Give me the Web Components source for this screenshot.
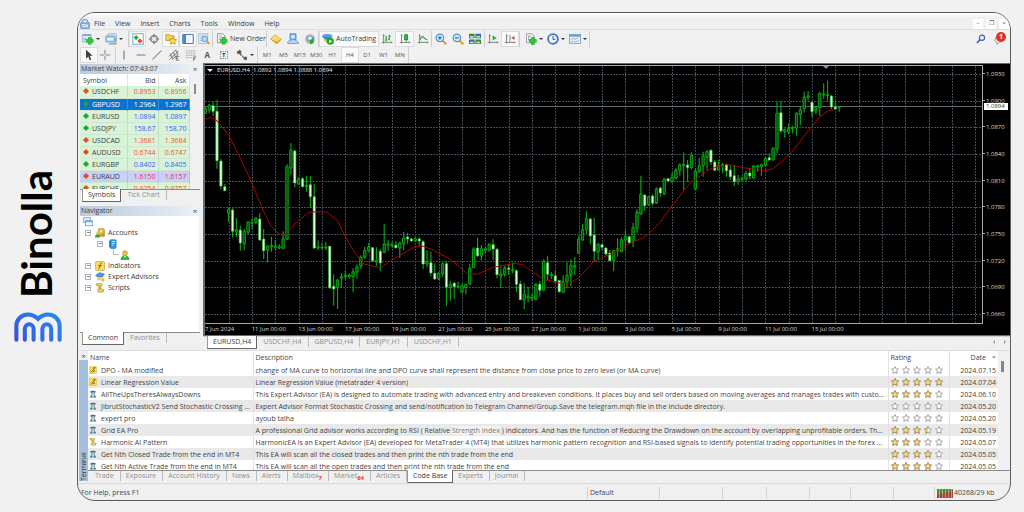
<!DOCTYPE html>
<html lang="en">
<head>
<meta charset="utf-8">
<title>Binolla trading terminal</title>
<style>
  html, body { margin: 0; height: 100%; }
  body {
    display: flex;
    background: #f1f1f1;
    color: #3c3c3c;
    font: 7px/12px "Open Sans", "Noto Sans", sans-serif;
    overflow: hidden;
  }
</style>
</head>
<body>
<brand-rail></brand-rail>
<app-window>
  <menu-bar slot="top"></menu-bar>
  <main-toolbar slot="top"></main-toolbar>
  <draw-toolbar slot="top"></draw-toolbar>
  <market-watch slot="side"></market-watch>
  <navigator-tree slot="side"></navigator-tree>
  <price-chart slot="chart"></price-chart>
  <tab-strip slot="chart" kind="chart" active="0" items="EURUSD,H4|USDCHF,H4|GBPUSD,H4|EURJPY,H1|USDCHF,H1"></tab-strip>
  <code-base slot="bottom"></code-base>
  <status-bar slot="bottom"></status-bar>
</app-window>

<script>
const RESET = `
  :host, *, *::before, *::after { box-sizing: border-box; }
  button { all: unset; box-sizing: border-box; cursor: default; white-space: nowrap; }
  ul { list-style: none; margin: 0; padding: 0; }
  table { border-collapse: collapse; table-layout: fixed; width: 100%; }
  th, td { padding: 0; font-weight: 400; text-align: left; white-space: nowrap; overflow: hidden; }
`;

class UiElement extends HTMLElement {
  constructor() {
    super();
    this.attachShadow({ mode: "open" });
  }
  connectedCallback() {
    this.shadowRoot.innerHTML = `<style>${RESET}${this.css()}</style>${this.html()}`;
    this.ready();
  }
  css() { return ""; }
  html() { return ""; }
  ready() {}
}

/* ---------- icons (16 x 16 grid) ---------- */
const PLUS = (x, y, r = 3.6) => `<path d="M${x} ${y - r}V${y + r}M${x - r} ${y}H${x + r}" stroke="#0d9f1d" stroke-width="4.400"/><path d="M${x} ${y - r + .7}V${y + r - .7}M${x - r + .7} ${y}H${x + r - .7}" stroke="#25cf33" stroke-width="3"/>`;
const AXES = `<path d="M3.500 2V14M1 12.500H15" stroke="#7c8085" stroke-width="1.300" fill="none"/><path d="M2 4L3.500 1.500L5 4M13 11L15.500 12.500L13 14" fill="#7c8085"/>`;
const ICONS = {
  app: `<path d="M3 7V5a5 4 0 0 1 10 0v2" fill="none" stroke="#4a86d0" stroke-width="1.600"/><rect x="1" y="6" width="14" height="9" rx="1" fill="#8cb8ee" stroke="#3f78c4"/><rect x="3.500" y="8" width="9" height="5" fill="#eef5ff"/><path d="M4 12l2.500-2.500 2 1.500L12 8.500" stroke="#3f78c4" fill="none"/>`,
  newchart: `<rect x="1" y="2" width="11" height="10" fill="#e8f1fa" stroke="#7aa6d4"/><rect x="1" y="2" width="11" height="2" fill="#7aabdc"/><path d="M3 10V7M5 10V6M7 10V8" stroke="#5b93cf"/>${PLUS(10.5, 10.5, 4.8)}`,
  profiles: `<rect x="4" y="1" width="11" height="8" rx="1" fill="#dcebfa" stroke="#6fa0d0"/><rect x="1" y="4" width="12" height="8" rx="1" fill="#a9cdf0" stroke="#5a8fc6"/><rect x="3" y="6.500" width="8" height="3.500" fill="#eaf4ff"/><path d="M5 14.500H14.500V7" stroke="#8395a8" stroke-width="1.500" fill="none"/>`,
  watch: `<rect x="1" y="1" width="14" height="14" fill="#fff" stroke="#73a7d8" stroke-width="1.300"/><path d="M5.500 2.500l3.500 3.500-3.500 3.500L2 6z" fill="#22b131"/><path d="M10.500 7l3.500 3.500-3.500 3.500L7 10.500z" fill="#ee4a20"/>`,
  target: `<circle cx="8" cy="8" r="4.500" fill="none" stroke="#6d747c" stroke-width="1.500"/><path d="M8 1v5M8 10v5M1 8h5M10 8h5" stroke="#6d747c" stroke-width="1.500"/>`,
  folderstar: `<path d="M1 2h5l1 1.500h5V10H1z" fill="#f4cf5c" stroke="#c0932a"/><path d="M10.500 5.500l1.600 3.200 3.400.4-2.500 2.400.6 3.400-3.100-1.600-3.100 1.600.6-3.400L5.500 9.100l3.400-.4z" fill="#ffe04a" stroke="#b8871d"/>`,
  panel: `<rect x="1" y="2" width="14" height="12" rx="1" fill="#fff" stroke="#3f79bd" stroke-width="1.500"/><rect x="1.500" y="2.500" width="4" height="11" fill="#4f88c8"/><path d="M8 5h5M8 8h5M8 11h3" stroke="#d5e3f2"/>`,
  tester: `<rect x="1" y="1" width="12" height="13" fill="#e3eefa" stroke="#8fb1d4"/><path d="M3 4h8M3 7h8M3 10h4" stroke="#7fa6cd"/><circle cx="9" cy="8" r="3.500" fill="#bfe0f8" stroke="#5f8fbe" stroke-width="1.300"/><path d="M11.500 10.500L15 14.500" stroke="#d79a24" stroke-width="2.400"/>`,
  order: `<path d="M2 1h7l3 3v9H2z" fill="#fafafa" stroke="#777"/><path d="M4 4h4M4 6.500h5M4 9h3" stroke="#888"/>${PLUS(10.5, 10.5, 4.8)}`,
  gold: `<path d="M1 8l6-5 8 5.500-6 5.500z" fill="#e0a526" stroke="#a8741a"/><path d="M1 8l6-5 8 5-6 4z" fill="#ffd255"/><path d="M4 8l4-3" stroke="#fff3c4" stroke-width="1.300"/>`,
  community: `<path d="M4 1h8v8H4z" fill="#7bb2ee" stroke="#3f7fc8"/><path d="M5.500 3h5v4h-5z" fill="#d9ebff"/><path d="M1 14c-1-3 2-4.500 3.500-3.500 2-3 6-2.500 7 0 2-.5 4 1 3.500 3.500z" fill="#b5d6fa" stroke="#4f8fd8"/>`,
  signal: `<circle cx="8" cy="8" r="7" fill="#c8d0d6"/><circle cx="8" cy="8" r="5" fill="#8aa0b0"/><circle cx="8" cy="7" r="2.500" fill="#eaf0f4"/><path d="M8 7v9M8 9c3 0 5-2 5-5v8c-1 2-3 3-5 3z" fill="#2aa63a"/>`,
  auto: `<ellipse cx="7" cy="4.500" rx="7" ry="3.500" fill="#5fa6dc"/><path d="M3 5h8v4H3z" fill="#3e88c4"/><path d="M2 9c2 5 8 5 9-1l-4 1z" fill="#efc24a"/><circle cx="11" cy="11" r="4.800" fill="#17a828"/><path d="M9.600 8.500v5l4-2.500z" fill="#fff"/>`,
  bars: `${AXES}<path d="M7 4v7M7 9.500H5.500M11 2.500v7M11 4h2M9.500 8.500H11" stroke="#23a332" stroke-width="1.600"/>`,
  candles: `${AXES}<path d="M9.500 1v10.500" stroke="#16862a" stroke-width="1.300"/><rect x="7.500" y="2.500" width="4" height="6.500" fill="#2bc23c" stroke="#16862a"/>`,
  line: `${AXES}<path d="M4 9c2-5 4-5 5-3s3 2 5 3" fill="none" stroke="#3da048" stroke-width="1.600"/>`,
  zoomin: `<path d="M10 10l5 5" stroke="#d9a22f" stroke-width="3"/><circle cx="6.500" cy="6.500" r="5" fill="#d6ecfb" stroke="#5790c8" stroke-width="1.600"/><path d="M6.500 4v5M4 6.500h5" stroke="#2b6fb4" stroke-width="1.500"/>`,
  zoomout: `<path d="M10 10l5 5" stroke="#d9a22f" stroke-width="3"/><circle cx="6.500" cy="6.500" r="5" fill="#d6ecfb" stroke="#5790c8" stroke-width="1.600"/><path d="M4 6.500h5" stroke="#2b6fb4" stroke-width="1.500"/>`,
  tile: `<path d="M0 1h7.500v6H0zM8.500 8.500H16v6H8.500z" fill="#3f8b33"/><path d="M8.500 1H16v6H8.500zM0 8.500h7.500v6H0z" fill="#2f6fb8"/><path d="M1.500 4h4.500v2H1.500zM10 4h4.500v2H10zM1.500 11.500h4.500v2H1.500zM10 11.500h4.500v2H10z" fill="#d8eec8"/>`,
  scroll: `${AXES}<path d="M7.500 3v7l5.500-3.500z" fill="#2fae3c"/>`,
  shift: `${AXES}<path d="M8 2.500v9" stroke="#7c8085" stroke-width="1.200"/><path d="M14 4v5l-4.500-2.500z" fill="#d8492c"/>`,
  indicator: `<path d="M2 1h7l3 3v9H2z" fill="#f4f4f4" stroke="#888"/><path d="M5 10V4h3" stroke="#777" fill="none"/>${PLUS(10.5, 10.5, 5)}`,
  clock: `<circle cx="8" cy="8" r="6.500" fill="#eef6ff" stroke="#3a78c4" stroke-width="2.400"/><path d="M8 4v4.500h3" stroke="#333f52" stroke-width="1.200" fill="none"/>`,
  template: `<rect x="0.500" y="2" width="15" height="12" fill="#eaf2fb" stroke="#6798cb"/><rect x="0.500" y="2" width="15" height="3" fill="#6c9fd6"/><path d="M2 9l3-2 3 1.500L12 6.500M2 12l4-1 3 1 4-2" stroke="#8d9ca8" fill="none"/>`,
  search: `<circle cx="9.500" cy="6" r="4.200" fill="#e7eefc" stroke="#3f62c0" stroke-width="1.800"/><path d="M6.500 9L1.500 14.500" stroke="#3f62c0" stroke-width="2.400"/>`,
  chat: `<path d="M3 4l8-1 3 6-6 3-3 3-.5-3L1 9z" fill="#e6e6e6" stroke="#8a8a8a" stroke-width="1.300"/>`,
  cursor: `<path d="M4 1v12l3-3 2 5 2-1-2-5h4z" fill="#3f3f3f"/>`,
  cross: `<path d="M8 1v6M8 9v6M1 8h6M9 8h6" stroke="#8a8a8a" stroke-width="1.400"/>`,
  vline: `<path d="M8 2v12" stroke="#777" stroke-width="1.500"/>`,
  hline: `<path d="M2 8h12" stroke="#777" stroke-width="1.500"/>`,
  trend: `<path d="M2 14L14 2" stroke="#777" stroke-width="1.400"/>`,
  channel: `<path d="M1 10L11 1M2 14L14 3M6 14l8-7M3 6l3 7M7 4l3 7M11 2l2 6" stroke="#777" stroke-width="1.300"/><path d="M11 15v-5h4M11 12.500h3M11 15h4" stroke="#555" fill="none"/>`,
  fibo: `<path d="M1 2.500h13M1 5.500h13M1 8.500h13M1 11.500h9" stroke="#888" stroke-dasharray="1.500 .8"/><path d="M11.500 15.500v-5H15M11.500 13H14" stroke="#555" fill="none"/>`,
  arrows: `<path d="M1 4l4-3 3 3-2 1 2 3-2 1-2-3-2 1zM8 8l3 3 1-1 3 1-1 4-4-1 1-1-3-3z" fill="#555"/>`,
  accounts: `<path d="M6 1h7a2 2 0 0 1 2 2v10H4z" fill="#e2b032" stroke="#a67c17"/><circle cx="9.500" cy="5" r="2.500" fill="#f6dc82"/><circle cx="4" cy="8" r="2.300" fill="#e9c764"/><path d="M0 15a4 5 0 0 1 8 0z" fill="#27b233"/><path d="M9 13a3 4 0 0 1 6 0z" fill="#c8901e"/>`,
  server: `<rect x="3" y="1" width="10" height="14" rx="2" fill="#2f9be4" stroke="#1c78bd"/><path d="M6 4h5M6 7h5M6 10h3" stroke="#d7eeff" stroke-width="1.300"/><path d="M3 3v10" stroke="#0f5e9c" stroke-width="1.500"/>`,
  user: `<circle cx="8" cy="5" r="3.800" fill="#f0c555" stroke="#a67c17"/><path d="M1.500 15c0-8 13-8 13 0z" fill="#27c233" stroke="#13861f"/><path d="M6 9l2 3 2-3z" fill="#fff"/>`,
  fn: `<rect x="1" y="1" width="14" height="14" rx="1" fill="#ffe05a" stroke="#a98c2f"/><path d="M11 3.500c-2-.5-2.500 1-3 4s-1 5-3 4.500M5.500 7.500h5" stroke="#4b4630" stroke-width="1.300" fill="none"/>`,
  expert: `<path d="M1 5l6-4 8 2-3 5H4z" fill="#4b9ad6" stroke="#2d75ae"/><path d="M3 9c1 5 5 5 7 2l-1-3z" fill="#efc75a"/><path d="M11 9l4 2-1 4-4-1z" fill="#e5b32d"/>`,
  script: `<path d="M2 1h9v3l-2 .500v5l5 1-1 4H5l-1-4 2-.500V4.500L2 4z" fill="#f0cf55" stroke="#a98a2a"/><path d="M6 6h4M7 8.500h3" stroke="#a98a2a"/>`,
  bot: `<path d="M2 3l6-2 6 2-1 2H3z" fill="#32749c"/><rect x="5" y="4.500" width="6" height="4" fill="#e4cf9a" stroke="#476d84"/><path d="M1.500 15l2.500-5 4 2 4-2 2.500 5z" fill="#3a7ba2"/><path d="M7 11h2v4H7z" fill="#f4f4f4"/>`,
  indi: `<rect x="1" y="1" width="14" height="14" rx="1" fill="#f9d84c" stroke="#d9b63a"/><path d="M4 13L12 3M8 11l4-1M9 3.500h3.500" stroke="#4c4625" stroke-width="1.600"/>`,
  windows: `<rect x="1" y="1" width="11" height="8" fill="#dcebfa" stroke="#6fa6dc" stroke-width="1.300"/><rect x="4" y="6" width="11" height="8" fill="#f2f8ff" stroke="#5f9bd8" stroke-width="1.300"/><path d="M4 7.500h11" stroke="#5f9bd8" stroke-width="1.600"/>`,
};
class MtIcon extends UiElement {
  css() { return `:host{display:block;width:12px;height:12px;flex:none} :host([small]){width:8px;height:8px} :host([mid]){width:10px;height:10px} svg{display:block;width:100%;height:100%}`; }
  html() { return `<svg viewBox="0 0 16 16" fill="none" aria-hidden="true">${ICONS[this.getAttribute("name")]}</svg>`; }
}

/* ---------- brand ---------- */
class BrandRail extends UiElement {
  css() { return `
    :host { display: flex; flex-direction: column; align-items: center; flex: none; width: 77px; padding: 170px 2px 0 0; gap: 14px; }
    span { writing-mode: vertical-rl; transform: rotate(180deg); margin-right: 4px; font: 700 42px/48px Lato, "Open Sans", sans-serif; color: #000; }
    svg { display: block; width: 48px; height: 31px; }`; }
  html() { return `<span>Binolla</span>
    <svg viewBox="41 480 142 91" fill="none" stroke="url(#g)" stroke-width="12" stroke-linecap="round" aria-hidden="true">
      <defs><linearGradient id="g" gradientUnits="userSpaceOnUse" x1="60" y1="570" x2="150" y2="480"><stop offset="0" stop-color="#3454e6"/><stop offset="1" stop-color="#2a86ea"/></linearGradient></defs>
      <path d="M48 562V522A34 34 0 0 1 82 487Q99 487 112 500Q125 487 142 487A34 34 0 0 1 176 522V562"/>
      <path d="M73 562V529A13 13 0 0 1 99 529V562M125 562V529A13 13 0 0 1 151 529V562"/>
    </svg>`; }
}

/* ---------- window frame ---------- */
class AppWindow extends UiElement {
  css() { return `
    :host { display: flex; flex-direction: column; flex: 1; min-width: 0; align-self: flex-start; margin: 12px 13px 0 0;
      border: 1px solid #5c5c5c; border-radius: 18px; overflow: hidden; background: #f0f0f0; }
    .top { background: linear-gradient(#fff, #f0f0f0 5px); }
    .main { display: grid; grid-template-columns: 125px minmax(0, 1fr); height: 287px; }
    .side { display: flex; flex-direction: column; gap: 4px; padding: 1px 3px 5px 2px; min-width: 0; }
    .chart { display: flex; flex-direction: column; min-width: 0; }`; }
  html() { return `<div class="top"><slot name="top"></slot></div>
    <div class="main"><div class="side"><slot name="side"></slot></div><div class="chart"><slot name="chart"></slot></div></div>
    <slot name="bottom"></slot>`; }
}

class MenuBar extends UiElement {
  css() { return `
    :host { display: flex; align-items: center; height: 17px; padding: 5px 1px 0 2px; border-bottom: 1px solid #dedede; }
    nav { display: flex; gap: 10px; margin-left: 4px; flex: 1; }
    .win { display: flex; gap: 3px; }
    .win button { width: 10px; height: 10px; line-height: 9px; background: #fff; text-align: center; color: #556; font-size: 6px; }`; }
  html() { return `<mt-icon name="app" mid></mt-icon><nav>${["File", "View", "Insert", "Charts", "Tools", "Window", "Help"].map(t => `<button>${t}</button>`).join("")}</nav>
    <div class="win"><button aria-label="Minimize">–</button><button aria-label="Restore">❐</button><button aria-label="Close">×</button></div>`; }
}

const TOOL_CSS = `
  :host { display: flex; align-items: center; height: 17px; }
  .g { display: flex; height: 16px; border-right: 1px solid #cfcfcf; }
  button { flex: 1 1 0; display: flex; align-items: center; justify-content: center; height: 16px; }
  button.wide { flex: none; gap: 2px; padding: 0 2px; }
  button.drop { flex: 1.500 1 0; }
  button.drop::after { content: ""; border: 2px solid transparent; border-top-color: #333; border-bottom: 0; margin-left: 2px; }
  button.on { background: #fafafa; border: 1px solid #dcdcdc; }
`;
const tool = t => {
  const [name, mod = ""] = t.split(":");
  return `<button class="${mod}" aria-label="${name}"><mt-icon name="${name}"></mt-icon></button>`;
};
class MainToolbar extends UiElement {
  css() { return TOOL_CSS + `
    :host { padding-left: 2px; }
    .a { width: 49px; padding-right: 3px } .b { width: 84px } .c { width: 54px; padding-left: 3px } .d { width: 52px } .e { width: 59px } .f { width: 54px } .h { width: 53px } .i { width: 35px } .j { width: 70px; padding-left: 3px }
    .c button { padding: 0 }
    .end { margin-left: auto; display: flex; align-items: center; gap: 7px; padding-right: 4px; position: relative; }
    .badge { position: absolute; right: 4px; top: 1px; width: 10px; height: 10px; border-radius: 5px; background: #e0321f; color: #fff; font-weight: 700; line-height: 10px; text-align: center; }
    .end mt-icon { width: 10px; height: 10px; }
    .end .chat { width: 14px; justify-content: flex-start; padding-top: 3px; }`; }
  html() {
    const g = (c, list) => `<div class="g ${c}">${list.split(" ").map(tool).join("")}</div>`;
    return g("a", "newchart:drop profiles:drop") + g("b", "watch:on target folderstar:on panel:on tester")
      + `<div class="g c"><button class="wide"><mt-icon name="order"></mt-icon>New Order</button></div>`
      + g("d", "gold community signal")
      + `<div class="g e"><button class="wide on"><mt-icon name="auto"></mt-icon>AutoTrading</button></div>`
      + g("f", "bars candles:on line") + g("h", "zoomin zoomout tile") + g("i", "scroll shift:on") + g("j", "indicator:drop clock:drop template:drop")
      + `<div class="end"><button aria-label="Search"><mt-icon name="search"></mt-icon></button><button class="chat" aria-label="Messages"><mt-icon name="chat"></mt-icon></button><span class="badge">1</span></div>`;
  }
}
class DrawToolbar extends UiElement {
  css() { return TOOL_CSS + `
    :host { padding-left: 2px; height: 16px; }
    .a { width: 36px; padding-right: 2px } .b { width: 142px } .t { width: 151px; padding-left: 1px; font-size: 6px; color: #555; }
    .txt { font: 700 8px/12px "Open Sans", sans-serif; color: #555; }
    .box { width: 8px; height: 8px; border: 1px dotted #888; font: 700 6px/7px "Open Sans", sans-serif; text-align: center; }`; }
  html() {
    return `<div class="g a">${["cursor:on", "cross"].map(tool).join("")}</div>
      <div class="g b">${["vline", "hline", "trend", "channel", "fibo"].map(tool).join("")}<button class="txt">A</button><button><span class="box">T</span></button>${tool("arrows:drop")}</div>
      <div class="g t">${["M1", "M5", "M15", "M30", "H1", "H4", "D1", "W1", "MN"].map(t => `<button class="${t === "H4" ? "on" : ""}">${t}</button>`).join("")}</div>`;
  }
}

/* ---------- tab strips ---------- */
class TabStrip extends UiElement {
  css() { return `
    :host { display: flex; align-items: flex-start; height: 13px; flex: none; padding-left: 2px; border-top: 1px solid #8c8c8c; color: #8d8d8d; }
    :host([kind=chart]) { border-top-color: #d0d0d0; padding-left: 4px; }
    :host([kind=chart]) .arrows { margin-left: auto; display: flex; gap: 9px; padding: 3px 4px; }
    .arrows i { border: 2px solid transparent; border-left-color: #999; border-right: 0; }
    .arrows i:first-child { border: 2px solid transparent; border-right-color: #999; border-left: 0; }
    button { height: 10px; line-height: 10px; padding: 0 6px; border-right: 1px solid #bbb; }
    :host([kind=terminal]) button { padding-left: 5px; }
    button.active { height: 13px; line-height: 12px; margin-top: -1px; padding: 0 5px; background: #fff; color: #3c3c3c; border: 1px solid #666; border-top: 0; border-left-color: #999; }
    sub { font: 700 6px/6px "Open Sans", sans-serif; color: #e33; vertical-align: -2px; }`; }
  html() {
    const active = +this.getAttribute("active");
    const tabs = this.getAttribute("items").split("|").map((t, i) => {
      const [label, n] = t.split("#");
      return `<button role="tab" aria-selected="${i === active}" class="${i === active ? "active" : ""}">${label}${n ? `<sub>${n}</sub>` : ""}</button>`;
    }).join("");
    return tabs + (this.getAttribute("kind") === "chart" ? `<span class="arrows"><i></i><i></i></span>` : "");
  }
}

class PanelTitle extends UiElement {
  css() { return `
    :host { display: flex; justify-content: space-between; height: 10px; line-height: 10px; padding: 0 1px; background: linear-gradient(90deg, #bccbda, #dfe9f2 80%, #f0f0f0 94%); flex: none; }
    button { width: 8px; text-align: center; font-size: 8px; }`; }
  html() { return `<slot></slot><button aria-label="Close">×</button>`; }
}

class MarketWatch extends UiElement {
  css() { return `
    :host { display: flex; flex-direction: column; height: 138px; flex: none; }
    .body { display: flex; flex: 1; min-height: 0; overflow: hidden; background: #fff; }
    table { flex: 1; width: 109px; }
    .bar { width: 11px; background: #f0f0f0; padding: 10px 4px 0; }
    .bar i { display: block; height: 10px; background: #8a8a8a; }
    tr { height: 12px; }
    tbody tr { background: #d8f3d8; border-bottom: 1px solid #cde8cd; }
    td, th { line-height: 11px; }
    th { border-right: 1px solid #e3e3e3; padding-left: 3px; }
    td { border-right: 1px solid #c5dfc5; }
    th:nth-child(n+2), td:nth-child(n+2) { text-align: right; padding-right: 2px; }
    .up td:nth-child(n+2) { color: #3a5cf0; }
    .dn td:nth-child(n+2) { color: #f0542f; }
    tr.sel { background: #0a72d1; }
    tr.sel td, tr.sel td:nth-child(n+2) { color: #fff; border-color: #3b8fdd; }
    tr.hot { background: #c9d0f6; }
    tr.hot td { border-color: #b4bdea; }
    tr.hot td:nth-child(n+2) { color: #e8305a; }
    td i { display: inline-block; width: 4px; height: 4px; margin: 0 4px; transform: rotate(45deg); background: #ee5522; outline: 1px solid #d04a20; outline-offset: -1px; vertical-align: 1px; }
    .up i { background: #27b637; outline-color: #1a9a2a; }`; }
  html() {
    const rows = ["USDCHF 0.8953 0.8956 dn", "GBPUSD 1.2964 1.2967 up sel", "EURUSD 1.0894 1.0897 up", "USDJPY 158.67 158.70 up", "USDCAD 1.3681 1.3684 dn", "AUDUSD 0.6744 0.6747 dn", "EURGBP 0.8402 0.8405 up", "EURAUD 1.6150 1.6157 dn hot", "EURCHF 0.9754 0.9757 dn"];
    return `<panel-title>Market Watch: 07:43:07</panel-title>
      <div class="body"><table><colgroup><col style="width:47px"><col style="width:31px"><col style="width:31px"></colgroup>
      <thead><tr><th>Symbol</th><th>Bid</th><th>Ask</th></tr></thead>
      <tbody>${rows.map(r => { const [s, b, a, ...c] = r.split(" "); return `<tr class="${c.join(" ")}"><td><i></i>${s}</td><td>${b}</td><td>${a}</td></tr>`; }).join("")}</tbody></table>
      <div class="bar"><i></i></div></div>
      <tab-strip active="0" items="Symbols|Tick Chart"></tab-strip>`;
  }
}

class NavigatorTree extends UiElement {
  css() { return `
    :host { display: flex; flex-direction: column; flex: 1; min-height: 0; }
    .body { flex: 1; background: #fff; margin-right: 1px; min-height: 0; }
    ul { padding: 0 3px; }
    li { display: flex; align-items: center; height: 11px; gap: 3px; }
    .x { width: 6px; height: 6px; border: 1px solid #a9b4c4; background: linear-gradient(#7d8ba0, #7d8ba0) center / 3px 1px no-repeat #fff; margin: 0 1px 0 2px; }
    .l1 { padding-left: 12px; } .l2 { padding-left: 38px; }
    .l1 .x { margin-right: 2px; }
    .l2::before { content: ""; width: 6px; height: 6px; margin: -6px -2px 0 -8px; border: solid #bbb; border-width: 0 0 1px 1px; }`; }
  html() {
    const item = (icon, text) => `<li><span class="x"></span><mt-icon name="${icon}" mid></mt-icon>${text}</li>`;
    return `<panel-title>Navigator</panel-title><div class="body"><ul>
      <li><mt-icon name="windows" mid></mt-icon></li>${item("accounts", "Accounts")}
      <li class="l1"><span class="x"></span><mt-icon name="server" mid></mt-icon></li>
      <li class="l2"><mt-icon name="user" mid></mt-icon></li>
      ${item("fn", "Indicators")}${item("expert", "Expert Advisors")}${item("script", "Scripts")}</ul></div>
      <tab-strip active="0" items="Common|Favorites"></tab-strip>`;
  }
}

/* ---------- chart ---------- */
/* One candle per entry: direction, high, body top, body bottom, low (in thirds of a pixel). */
const CANDLES = `u140,145,160,160 u131,135,150,160 d125,137,154,168 d120,154,302,326 d297,303,378,388 d372,380,392,393 u442,448,460,487 d445,450,514,532 u475,509,516,530 d497,510,549,572 u506,514,552,570 u484,486,517,523
u476,488,490,507 u472,475,487,493 d460,477,540,543 d507,537,572,597 u556,559,570,607 u530,556,560,575 u540,558,562,570 u552,560,564,568 u514,536,565,567 u313,320,538,540 u250,270,324,345 d268,273,369,382
u350,358,372,375 d352,356,380,382 u347,376,380,395 d348,374,410,444 d372,410,564,567 u541,560,564,570 u548,562,564,568 u545,561,564,570 d557,559,683,687 d643,679,687,737 u656,660,683,747 u640,650,655,685
u632,646,650,657 u640,645,650,655 u625,635,650,697 u613,621,636,656 u586,591,619,628 u560,571,592,597 u549,561,572,577 d561,563,602,605 u562,601,606,619 d567,574,609,634 u493,552,577,580 u540,552,556,572
u546,554,557,562 d543,556,563,565 u545,549,564,594 u515,534,551,571 d519,531,537,551 d534,537,543,545 u530,536,542,546 d530,537,543,558 d541,545,612,627 u571,605,612,622 d575,608,639,649 d610,640,657,660
u635,640,657,660 u607,611,642,650 d602,611,682,737 u662,673,682,722 d668,669,680,716 u665,679,682,686 u672,678,697,700 u672,673,683,703 u611,625,672,675 u562,567,623,625 d533,564,587,591 u555,566,588,601
u562,566,571,580 u550,553,570,575 d538,554,567,600 d563,568,644,655 u620,642,648,684 u618,624,644,650 d612,624,628,645 u607,629,632,640 d628,632,673,696 d662,672,719,720 u670,703,720,748 u680,709,714,727
u700,711,716,722 u670,673,718,721 d662,673,691,711 u598,604,691,693 d587,608,643,660 u635,643,647,657 d630,647,664,670 d660,662,695,698 u645,665,697,698 u605,646,665,685 u598,616,646,680 u591,617,622,645
u527,538,580,582 u492,509,540,543 u454,475,509,522 d473,477,528,553 d473,525,574,605 u548,553,576,601 d550,554,562,570 d562,564,582,587 d570,579,602,604 u570,572,602,634 u535,566,573,590 u532,539,575,577
u511,529,540,568 d528,530,548,551 u488,503,546,562 u447,456,505,519 u347,403,462,465 d403,405,437,452 u407,410,434,438 d403,408,430,437 u382,387,430,432 d380,384,399,410 u354,357,402,405 d353,356,363,366
u338,352,365,368 u325,330,355,358 u310,315,331,347 u277,313,318,390 d300,315,323,365 u277,286,323,328 u325,334,387,390 u293,317,335,340 u276,289,317,350 u270,275,292,330 d268,271,306,315 d300,306,331,333
u300,317,330,332 u308,313,318,340 d310,315,332,350 d317,330,350,360 d315,347,365,378 u345,357,365,374 u350,354,358,365 u333,340,357,362 d323,339,348,358 u315,318,354,357 u315,317,321,335 u312,313,320,348
u292,296,316,320 d280,293,300,303 u262,265,299,303 u125,160,268,280 d123,158,213,220 u205,209,215,233 u190,205,216,222 u197,203,206,220 u157,160,204,227 u140,149,164,195 u95,111,146,158 u93,108,112,122
d126,127,155,172 u138,143,152,163 u97,100,143,168 u70,102,105,117 u62,104,107,122 d105,108,141,147 d125,141,147,150 u138,140,143,155`.split(/\s+/);
const AVERAGE = "8,178 25,173 40,177 80,225 115,295 150,370 185,455 205,495 230,522 248,527 275,495 320,457 345,455 375,456 407,482 430,530 460,580 485,612 535,624 570,600 640,559 660,558 689,568 744,597 794,640 824,643 874,622 939,610 964,615 1024,658 1099,675 1134,650 1174,605 1214,588 1284,550 1324,533 1344,518 1374,487 1411,436 1464,370 1524,327 1574,313 1624,323 1684,332 1714,326 1764,282 1814,218 1854,170 1879,152 1904,148";

class PriceChart extends UiElement {
  css() { return `
    :host { display: grid; grid-template-columns: minmax(0, 1fr) 27px; grid-template-rows: 259px 11px; height: 273px; flex: none;
      background: #000; color: #d8d8d8; font-size: 6px; line-height: 8px; padding-top: 1px; border: solid #6c6c6c; border-width: 1px 0 1px 2px; position: relative; }
    .plot { border: solid #a8a8a8; border-width: 1px 1px 1px 0; overflow: hidden; }
    svg { display: block; width: 100%; height: 100%; }
    .price { display: grid; grid-auto-rows: calc(80px / 3); padding: 5px 0 0 3px; }
    .price span::before { content: ""; display: inline-block; width: 2px; height: 1px; background: #a8a8a8; margin: 0 1px 2px -3px; }
    .time { display: grid; grid-auto-flow: column; grid-auto-columns: calc(140px / 3); justify-content: start; white-space: nowrap; padding-top: 1px; }
    .now { position: absolute; right: 2px; top: 39px; width: 24px; height: 7px; line-height: 7px; background: #fff; color: #333; padding-left: 2px; }
    .head { position: absolute; left: 2px; top: 2px; display: flex; gap: 4px; align-items: center; white-space: pre; color: #e8e8e8; }
    .head i { border: 3px solid transparent; border-top-color: #eee; border-bottom: 0; }`; }
  html() {
    const prices = Array.from({ length: 10 }, (_, i) => (1.093 - i * 0.003).toFixed(4));
    const times = ["7 Jun 2024", "11 Jun 00:00", "13 Jun 00:00", "17 Jun 00:00", "19 Jun 00:00", "21 Jun 00:00", "25 Jun 00:00", "27 Jun 00:00", "1 Jul 00:00", "3 Jul 00:00", "5 Jul 00:00", "9 Jul 00:00", "11 Jul 00:00", "15 Jul 00:00"];
    return `<div class="plot"><svg aria-hidden="true"></svg></div>
      <div class="price">${prices.map(p => `<span>${p}</span>`).join("")}</div>
      <div class="time">${times.map(t => `<span>${t}</span>`).join("")}</div>
      <span class="now">1.0894</span><span class="head"><i></i>EURUSD,H4  1.0892 1.0894 1.0888 1.0894</span>`;
  }
  ready() {
    const px = x => ((x - 9) / 3).toFixed(1), py = y => ((y - 18) / 3).toFixed(1);
    let grid = "", wicks = "", up = "", down = "";
    for (let k = 0; k < 80; k++) grid += `M${Math.round(23.5 + k * 70 / 3) + .5} 0V260`;
    for (let k = 0; k < 10; k++) grid += `M0 ${Math.round(8 + k * 80 / 3) + .5}H2000`;
    CANDLES.forEach((c, i) => {
      const x = 10 + i * 35 / 3, [h, t, b, l] = c.slice(1).split(",").map(Number);
      wicks += `M${px(x)} ${py(h)}V${py(l)}`;
      const rect = `M${px(x - 3.5)} ${py(t)}H${px(x + 3.5)}V${py(Math.max(b, t + 2))}H${px(x - 3.5)}Z`;
      if (c[0] === "u") up += rect; else down += rect;
    });
    this.shadowRoot.querySelector("svg").innerHTML = `
      <path d="${grid}" stroke="#414c58" stroke-dasharray="2 1"/>
      <path d="M0 40.5H2000" stroke="#5a6771"/>
      <path d="${wicks}" stroke="#08b012" stroke-width="1.1"/>
      <path d="${up}" fill="#034d05" stroke="#08b012" stroke-width=".9"/>
      <path d="${down}" fill="#e2fbdc" stroke="#30c038" stroke-width=".6"/>
      <polyline points="${AVERAGE.split(" ").map(p => { const [x, y] = p.split(","); return px(x) + "," + py(y); }).join(" ")}" fill="none" stroke="#a80808" stroke-width="1"/>
      <path d="M618 0h6l-3 3z" fill="#8294a4"/>`;
  }
}

/* ---------- terminal ---------- */
const STAR = "M8 1l2.100 4.700 5 .600-3.700 3.500 1 5.200L8 12.400 3.600 15l1-5.200L.9 6.300l5-.600z";
class StarRating extends UiElement {
  css() { return `:host { display: grid; grid-template-columns: repeat(5, 11px); height: 12px; align-items: center; } svg { width: 8px; height: 8px; display: block; overflow: visible; }`; }
  html() {
    const v = +this.getAttribute("value");
    return Array.from({ length: 5 }, (_, i) => {
      const f = Math.max(0, Math.min(1, v - i));
      return `<svg viewBox="0 0 16 16" aria-hidden="true"><path d="${STAR}" fill="#fff" stroke="#8c8c8c" stroke-width="1.500"/>${f ? `<path d="${STAR}" fill="#fbd873" stroke="#9c8a5a" stroke-width="1.500" ${f < 1 ? 'style="clip-path:inset(0 50% 0 0)"' : ""}/>` : ""}</svg>`;
    }).join("");
  }
}
class CodeBase extends UiElement {
  css() { return `
    :host { display: grid; grid-template-columns: 10px minmax(0, 1fr); height: 134px; border-top: 1px solid #dcdcdc; border-bottom: 1px solid #dadada; }
    .rail { display: flex; flex-direction: column; padding-left: 1px; }
    .rail button { height: 9px; line-height: 9px; text-align: center; font-size: 8px; }
    .rail span { flex: 1; writing-mode: vertical-rl; transform: rotate(180deg); margin-bottom: 2px; background: #a5c0dc; line-height: 9px; overflow: hidden; color: #333; }
    .pane { display: flex; flex-direction: column; min-width: 0; height: 132px; }
    .body { flex: 1; display: flex; min-height: 0; overflow: hidden; background: #fff; margin-right: 3px; }
    .bar { flex: none; width: 9px; background: #f0f0f0; padding: 10px 3px 0; }
    .bar i { display: block; height: 11px; background: #858585; }
    table { flex: 1; min-width: 0; color: #444; }
    thead tr { height: 13px; } tbody tr { height: 12px; }
    tbody tr:nth-child(even) { background: #e9e9e9; }
    th, td { text-overflow: ellipsis; padding: 0 2px; border-right: 1px solid #e2e2e2; }
    td { line-height: 11px; }
    .r { padding: 0 0 0 2px; }
    .d { text-align: right; border: 0; }
    th.d i { display: inline-block; border: 2px solid transparent; border-top: 3px solid #aaa; border-bottom: 0; margin-left: 6px; vertical-align: 1px; }
    td:first-child mt-icon { display: inline-block; vertical-align: -1px; margin: 0 4px 0 -1px; }
    em { font-style: normal; color: #777; background: #f2f2f2; }`; }
  html() {
    const rows = [
      ["indi", "DPO - MA modified", "change of MA curve to horizontal line and DPO curve shall represent the distance from close price to zero level (or MA curve)", 0, "2024.07.15"],
      ["indi", "Linear Regression Value", "Linear Regression Value (metatrader 4 version)", 5, "2024.07.04"],
      ["bot", "AllTheUpsTheresAlwaysDowns", "This Expert Advisor (EA) is designed to automate trading with advanced entry and breakeven conditions. It places buy and sell orders based on moving averages and manages trades with customizable settings", 4, "2024.06.10"],
      ["bot", "JibrutStochasticV2 Send Stochastic Crossing Notification", "Expert Advisor Format Stochastic Crossing and send/notification to Telegram Channel/Group.Save the telegram.mqh file in the include directory.", 0, "2024.05.20"],
      ["bot", "expert pro", "ayoub talha", 0, "2024.05.20"],
      ["bot", "Grid EA Pro", "A professional Grid advisor works according to RSI ( Relative <em>Strength Index</em> ) indicators. And has the function of Reducing the Drawdown on the account by overlapping unprofitable orders. The closing of orders", 3.5, "2024.05.19"],
      ["script", "Harmonic AI Pattern", "HarmonicEA is an Expert Advisor (EA) developed for MetaTrader 4 (MT4) that utilizes harmonic pattern recognition and RSI-based signals to identify potential trading opportunities in the forex market", 3, "2024.05.07"],
      ["bot", "Get Nth Closed Trade from the end in MT4", "This EA will scan all the closed trades and then print the nth trade from the end", 4, "2024.05.05"],
      ["bot", "Get Nth Active Trade from the end in MT4", "This EA will scan all the open trades and then print the nth trade from the end", 4, "2024.05.05"],
    ];
    return `<div class="rail"><button aria-label="Close">×</button><span>Terminal</span></div>
      <div class="pane"><div class="body"><table>
        <colgroup><col style="width:165px"><col><col style="width:61px"><col style="width:49px"></colgroup>
        <thead><tr><th>Name</th><th>Description</th><th>Rating</th><th class="d">Date<i></i></th></tr></thead>
        <tbody>${rows.map(([i, n, d, s, t]) => `<tr><td><mt-icon name="${i}" small></mt-icon>${n}</td><td>${d}</td><td class="r"><star-rating value="${s}"></star-rating></td><td class="d">${t}</td></tr>`).join("")}</tbody>
      </table><div class="bar"><i></i></div></div>
      <tab-strip kind="terminal" active="8" items="Trade|Exposure|Account History|News|Alerts|Mailbox#7|Market#64|Articles|Code Base|Experts|Journal"></tab-strip></div>`;
  }
}

class StatusBar extends UiElement {
  css() { return `
    :host { display: grid; grid-template-columns: minmax(0, 1fr) 72px 63px 44px 43px 41px 43px 41px 76px; height: 16px; padding: 3px 0 1px; color: #444; }
    span { border-left: 1px solid #d2d2d2; padding-left: 2px; height: 12px; white-space: nowrap; }
    span:first-child { border: 0; padding: 0; }
    .net { display: flex; gap: 1px; align-items: center; }
    svg { width: 16px; height: 9px; }`; }
  html() { return `<span>For Help, press F1</span><span>Default</span>${"<span></span>".repeat(6)}
    <span class="net"><svg viewBox="0 0 16 9" aria-hidden="true"><path d="M0 0h16v3.500L0 8z" fill="#4f8a3c"/><path d="M0 9V6l16-4v7z" fill="#b23b3b"/><path d="M2.500 0v9M5.500 0v9M8.500 0v9M11.500 0v9M14.500 0v9" stroke="#e6e0d8" stroke-width=".5"/></svg>40268/29 kb</span>`; }
}

for (const [name, cls] of Object.entries({
  "mt-icon": MtIcon, "brand-rail": BrandRail, "menu-bar": MenuBar, "main-toolbar": MainToolbar, "draw-toolbar": DrawToolbar,
  "tab-strip": TabStrip, "panel-title": PanelTitle, "market-watch": MarketWatch, "navigator-tree": NavigatorTree,
  "price-chart": PriceChart, "star-rating": StarRating, "code-base": CodeBase, "status-bar": StatusBar, "app-window": AppWindow,
})) customElements.define(name, cls);
</script>
</body>
</html>
